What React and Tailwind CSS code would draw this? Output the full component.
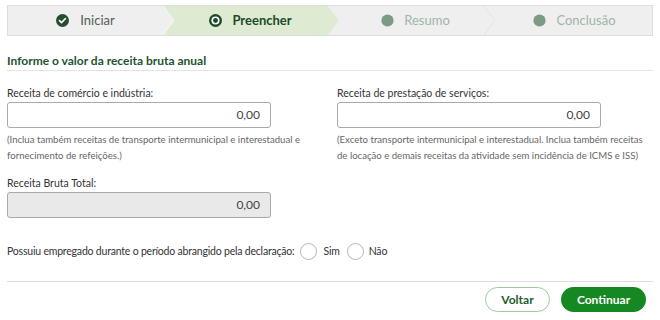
import React from "react";

function CheckIcon() {
  return (
    <svg width="13" height="13" viewBox="0 0 16 16">
      <circle cx="8" cy="8" r="8" fill="#234f30" />
      <path d="M4.3 8.2l2.5 2.4 4.9-5" fill="none" stroke="#fff" strokeWidth="2" strokeLinecap="round" strokeLinejoin="round" />
    </svg>
  );
}
function DotIcon() {
  return (
    <svg width="13" height="13" viewBox="0 0 16 16">
      <circle cx="8" cy="8" r="8" fill="#1d4a2a" />
      <circle cx="8" cy="8" r="5" fill="#fff" />
      <circle cx="8" cy="8" r="3" fill="#1d4a2a" />
    </svg>
  );
}
function GrayDot() {
  return (
    <svg width="13" height="13" viewBox="0 0 16 16">
      <circle cx="8" cy="8" r="7.5" fill="#7c9a86" />
    </svg>
  );
}

function Arrow({ fill, stroke }) {
  return (
    <svg className="absolute top-0 left-full z-10 h-full w-[11px]" viewBox="0 0 11 30" preserveAspectRatio="none">
      <polygon points="0,0 11,15 0,30" fill={fill} />
      <polyline points="0,0 11,15 0,30" fill="none" stroke={stroke} strokeWidth="1" />
    </svg>
  );
}

export default function App() {
  const font = { fontFamily: "Lato, 'Open Sans', sans-serif" };
  return (
    <div className="w-[660px] h-[320px] bg-white overflow-hidden px-[7px] pt-[5px]" style={font}>
      {/* Stepper */}
      <div className="flex h-[31px] border border-[#dedede]">
        <div className="relative flex-1 flex items-center justify-center gap-[11px] bg-[#efefef]">
          <CheckIcon />
          <span className="text-[13px] text-[#4f5e53]">Iniciar</span>
          <Arrow fill="#efefef" stroke="#f8f8f8" />
        </div>
        <div className="relative flex-1 flex items-center justify-center gap-[10px] bg-[#deebd2] pl-[10px]">
          <DotIcon />
          <span className="text-[13px] font-bold text-[#1c4a2a]">Preencher</span>
          <Arrow fill="#deebd2" stroke="#e8f1e0" />
        </div>
        <div className="relative flex-1 flex items-center justify-center gap-[10px] bg-[#efefef] pl-[10px]">
          <GrayDot />
          <span className="text-[13px] text-[#9fb5a7]">Resumo</span>
          <svg className="absolute top-0 right-[-2px] z-10 h-full w-[11px]" viewBox="0 0 11 30" preserveAspectRatio="none">
            <polyline points="0,0 11,15 0,30" fill="none" stroke="#e2e2e2" strokeWidth="1" />
          </svg>
        </div>
        <div className="relative flex-1 flex items-center justify-center gap-[10px] bg-[#efefef] pl-[4px]">
          <GrayDot />
          <span className="text-[13px] text-[#9fb5a7]">Conclusão</span>
        </div>
      </div>

      {/* Heading */}
      <div className="mt-[16px] border-b border-[#e3e3e3] pb-[1px]">
        <h2 className="text-[12px] font-bold text-[#24522f] leading-[17px]">Informe o valor da receita bruta anual</h2>
      </div>

      {/* Two columns */}
      <div className="flex gap-[66px] mt-[15px]">
        <div className="w-[264px] shrink-0">
          <label className="block text-[10.5px] text-[#333] leading-[14px] mb-[2px]">Receita de comércio e indústria:</label>
          <div className="h-[26px] border border-[#a9a9a9] rounded-[3px] flex items-center justify-end pr-[10px] text-[12px] text-[#444]">0,00</div>
          <p className="mt-[4px] text-[9.6px] leading-[16px] text-[#666] w-[325px]">(Inclua também receitas de transporte intermunicipal e interestadual e fornecimento de refeições.)</p>
        </div>
        <div className="flex-1">
          <label className="block text-[10.5px] text-[#333] leading-[14px] mb-[2px]">Receita de prestação de serviços:</label>
          <div className="w-[264px] h-[26px] border border-[#a9a9a9] rounded-[3px] flex items-center justify-end pr-[10px] text-[12px] text-[#444]">0,00</div>
          <p className="mt-[4px] text-[9.6px] leading-[16px] text-[#666] w-[318px]">(Exceto transporte intermunicipal e interestadual. Inclua também receitas de locação e demais receitas da atividade sem incidência de ICMS e ISS)</p>
        </div>
      </div>

      {/* Total */}
      <div className="mt-[12px] w-[264px]">
        <label className="block text-[10.5px] text-[#333] leading-[14px] mb-[2px]">Receita Bruta Total:</label>
        <div className="h-[26px] border border-[#a9a9a9] rounded-[3px] bg-[#e9e9e9] flex items-center justify-end pr-[10px] text-[12px] text-[#444]">0,00</div>
      </div>

      {/* Radio */}
      <div className="mt-[25px] h-[17px] flex items-center text-[10.5px] tracking-[-0.2px] text-[#333]">
        <span>Possuiu empregado durante o período abrangido pela declaração:</span>
        <span className="ml-[6px] w-[17px] h-[17px] rounded-full border border-[#b5b5b5] bg-white"></span>
        <span className="ml-[6px]">Sim</span>
        <span className="ml-[7px] w-[17px] h-[17px] rounded-full border border-[#b5b5b5] bg-white"></span>
        <span className="ml-[5px]">Não</span>
      </div>

      {/* Footer */}
      <div className="mt-[21px] border-t border-[#dcdcdc] pt-[5px] flex justify-end gap-[11px] pr-[7px]">
        <button className="h-[25px] w-[65px] rounded-full border border-[#9ccc9e] text-[12px] font-bold text-[#1e5c2a]">Voltar</button>
        <button className="h-[25px] w-[85px] rounded-full bg-[#168821] text-[12px] font-bold text-white">Continuar</button>
      </div>
    </div>
  );
}
